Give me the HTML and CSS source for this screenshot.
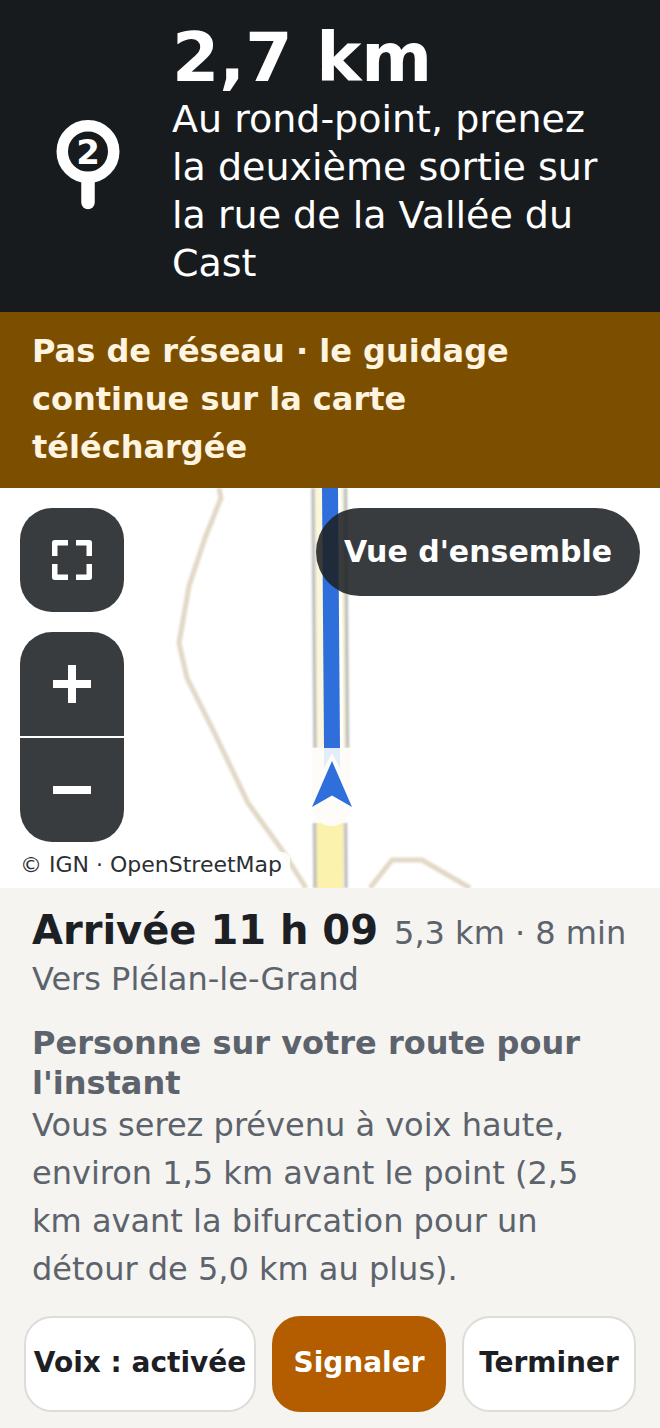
FILE: index.html
```html
<!DOCTYPE html>
<html lang="fr">
<head>
<meta charset="utf-8">
<title>Navigation</title>
<link rel="stylesheet" href="styles.css">
</head>
<body>
<div class="app">
  <header class="maneuver">
    <div class="maneuver-icon">
      <svg class="round-icon" width="64" height="91" viewBox="0 0 64 91">
        <circle cx="32" cy="32.500" r="25.750" fill="none" stroke="#fff" stroke-width="11.500"/>
        <path d="M32 60V83.500" stroke="#fff" stroke-width="13.500" stroke-linecap="round"/>
        <text class="round-num" x="32" y="45" text-anchor="middle">2</text>
      </svg>
    </div>
    <div class="maneuver-text">
      <div class="distance">2,7 km</div>
      <div class="instruction">Au rond-point, prenez la deuxième sortie sur la rue de la Vallée du Cast</div>
    </div>
  </header>
  <div class="banner">Pas de réseau · le guidage continue sur la carte téléchargée</div>
  <section class="map">
    <svg class="map-art" width="660" height="400" viewBox="0 0 660 400">
      <g fill="none" stroke-linejoin="round">
        <path class="track" d="M219 0L221 10L205 50L189 98L179 155L187 190L215 246L248 315L282 362L306 400"/>
        <path class="track" d="M370 400L392 372H422L470 400"/>
        <path class="road-top" d="M329.500 0L331.500 260"/>
        <path class="road" d="M329.500 335V400"/>
        <path class="casing" d="M313 0L315 260M345.500 0L347.500 260M314.500 335L315 400M345.500 335L346 400"/>
        <path class="blue-edge" d="M339 0L341 260"/>
        <path class="blue" d="M330 0L332 260"/>
      </g>
      <path class="halo" d="M312 262Q312 260 314 260H349Q351 260 351 262V318A19.500 20 0 0 1 312 318Z"/>
      <path class="halo-soft" d="M324 260H340V280L332 265L324 280Z"/>
      <path class="arrow" d="M332 273L352 319L332 307.500L312 319Z"/>
    </svg>
    <div class="map-left">
      <button class="map-btn fit" type="button" aria-label="Recentrer">
        <svg width="40" height="40" viewBox="0 0 40 40" fill="none" stroke="#fff" stroke-width="5.500" stroke-linejoin="round">
          <path d="M2.750 16V2.750H16M24 2.750H37.250V16M37.250 24V37.250H24M16 37.250H2.750V24"/>
        </svg>
      </button>
      <div class="zoom-group">
        <button class="zoom-btn" type="button" aria-label="Zoom avant">
          <svg width="38" height="38" viewBox="0 0 38 38" fill="#fff"><path d="M15 0H23V15H38V23H23V38H15V23H0V15H15Z"/></svg>
        </button>
        <button class="zoom-btn" type="button" aria-label="Zoom arrière">
          <svg width="38" height="8" viewBox="0 0 38 8" fill="#fff"><path d="M0 0H38V8H0Z"/></svg>
        </button>
      </div>
    </div>
    <button class="overview" type="button">Vue d'ensemble</button>
    <div class="attribution">© IGN · OpenStreetMap</div>
  </section>
  <section class="panel">
    <div class="eta-row">
      <span class="eta">Arrivée 11 h 09</span>
      <span class="eta-meta">5,3 km · 8 min</span>
    </div>
    <div class="toward">Vers Plélan-le-Grand</div>
    <h2 class="notice-title">Personne sur votre route pour l'instant</h2>
    <p class="notice-body">Vous serez prévenu à voix haute, environ 1,5 km avant le point (2,5 km avant la bifurcation pour un détour de 5,0 km au plus).</p>
    <div class="actions">
      <button class="action voice" type="button">Voix : activée</button>
      <button class="action report" type="button">Signaler</button>
      <button class="action finish" type="button">Terminer</button>
    </div>
  </section>
</div>
</body>
</html>
```
FILE: styles.css
```css
* { box-sizing: border-box; }
html, body { margin: 0; padding: 0; }
body {
  width: 660px;
  height: 1428px;
  overflow: hidden;
  font-family: "DejaVu Sans", sans-serif;
  background: #f5f4f0;
}
button { font-family: inherit; margin: 0; padding: 0; }
.app { display: flex; flex-direction: column; height: 1428px; }

.maneuver {
  flex: none;
  height: 312px;
  background: #171b1e;
  color: #fff;
  display: flex;
  align-items: stretch;
}
.maneuver-icon {
  width: 172px;
  flex: none;
  padding-left: 56px;
  padding-top: 119px;
}
.round-icon { display: block; }
.round-num { font: bold 34px "DejaVu Sans", sans-serif; fill: #fff; }
.maneuver-text { flex: 1; padding-top: 21px; padding-right: 48px; }
.distance { font-size: 68px; font-weight: 700; line-height: 74px; }
.instruction { font-size: 38px; line-height: 48px; }

.banner {
  flex: none;
  height: 176px;
  background: #7c4f00;
  color: #fff4e0;
  padding: 15px 32px 0;
  font-size: 32px;
  font-weight: 700;
  line-height: 48px;
}

.map { flex: none; position: relative; height: 400px; background: #fff; overflow: hidden; }
.map-art { position: absolute; left: 0; top: 0; display: block; }
.track { stroke: #e2d8c6; stroke-width: 5; filter: blur(1px); }
.road-top { stroke: #fbf7dc; stroke-width: 30; }
.road { stroke: #fbf2ae; stroke-width: 28; }
.casing { stroke: #bfbfbc; stroke-width: 3.5; filter: blur(0.8px); }
.blue-edge { stroke: #fff; stroke-width: 4; }
.blue { stroke: #2f6fdb; stroke-width: 16; }
.halo { fill: #fdfcf9; }
.halo-soft { fill: #e3ecfa; }
.arrow { fill: #2f6fdb; }

.map-left {
  position: absolute;
  left: 20px;
  top: 20px;
  display: flex;
  flex-direction: column;
  gap: 20px;
}
.map-btn {
  width: 104px;
  height: 104px;
  border: 0;
  border-radius: 32px;
  background: rgba(30, 33, 35, 0.88);
  display: flex;
  align-items: center;
  justify-content: center;
}
.zoom-group {
  width: 104px;
  border-radius: 32px;
  overflow: hidden;
  display: flex;
  flex-direction: column;
  gap: 2px;
}
.zoom-btn {
  width: 104px;
  height: 104px;
  border: 0;
  background: rgba(30, 33, 35, 0.88);
  display: flex;
  align-items: center;
  justify-content: center;
}
.overview {
  position: absolute;
  right: 20px;
  top: 20px;
  width: 324px;
  height: 88px;
  border: 0;
  border-radius: 44px;
  background: rgba(30, 33, 35, 0.88);
  color: #fff;
  font-size: 30px;
  font-weight: 700;
  padding-bottom: 2px;
}
.attribution {
  position: absolute;
  left: 12px;
  bottom: 0;
  height: 36px;
  padding: 0 8px;
  background: rgba(255, 255, 255, 0.9);
  border-radius: 0 8px 0 0;
  color: #2b2f33;
  font-size: 22px;
  line-height: 26px;
}

.panel { flex: 1; padding: 16px 24px 16px; display: flex; flex-direction: column; background: #f5f4f0; }
.eta-row { display: flex; align-items: baseline; gap: 16px; padding-left: 8px; height: 52px; }
.eta { font-size: 40px; font-weight: 700; color: #1c2024; line-height: 52px; }
.eta-meta { font-size: 32px; color: #5c636c; }
.toward { font-size: 32px; color: #5c636c; line-height: 46px; padding-left: 8px; }
.notice-title { margin: 21px 0 0; padding-left: 8px; font-size: 32px; font-weight: 700; line-height: 40px; color: #5c636c; }
.notice-body { margin: -2px 0 0; padding-left: 8px; font-size: 32px; line-height: 48px; color: #5c636c; }
.actions { display: flex; gap: 16px; margin-top: auto; height: 96px; }
.action { height: 96px; border-radius: 28px; font-size: 28px; font-weight: 700; color: #1c2024; background: #fff; border: 2px solid #dedcd8; padding-bottom: 4px; }
.voice { width: 232px; }
.report { width: 174px; background: #b35c00; border-color: #b35c00; color: #fff; }
.finish { width: 174px; }
```
